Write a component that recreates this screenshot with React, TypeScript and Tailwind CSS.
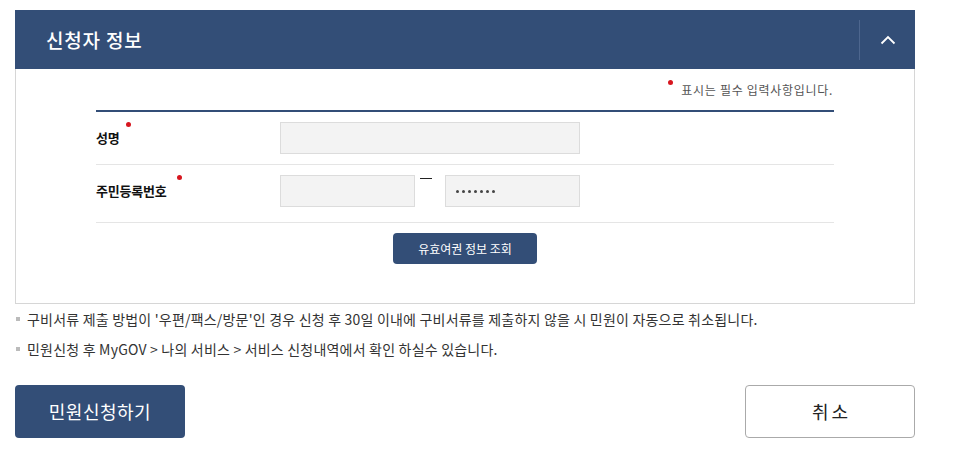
import React from 'react';

const font = { fontFamily: '"Noto Sans CJK KR", "Noto Sans", sans-serif' };

function Dot({ className = '' }: { className?: string }) {
  return <span className={`absolute w-[5px] h-[5px] rounded-full bg-[#d7161f] ${className}`} />;
}

export default function App() {
  return (
    <div className="w-[958px] h-[464px] bg-white pt-[10px] pl-[15px] text-[#333]" style={font}>
      <div className="w-[900px]">
        {/* header */}
        <div className="h-[59px] bg-[#334e77] flex items-center">
          <h2 className="ml-[31px] text-[19px] leading-none text-white font-medium tracking-[0.8px] flex-1">신청자 정보</h2>
          <div className="w-px h-[40px] bg-[#4d668e]" />
          <div className="w-[55px] flex justify-center">
            <svg width="16" height="10" viewBox="0 0 16 10" fill="none">
              <path d="M1.5 8.5 L8 2 L14.5 8.5" stroke="white" strokeWidth="1.8" />
            </svg>
          </div>
        </div>

        {/* body */}
        <div className="h-[235px] border-x border-b border-[#d6d6d6] px-[80px]">
          <div className="h-[41px] flex justify-end items-center pr-[1px]">
            <span className="relative pl-[13px] text-[12px] text-[#555] tracking-[0.7px]">
              <Dot className="left-[0px] -top-[1px]" />
              표시는 필수 입력사항입니다.
            </span>
          </div>
          <div className="border-t-2 border-[#334e77]">
            <div className="h-[53px] flex items-start pt-[10px] border-b border-[#e5e5e5]">
              <div className="w-[184px] h-[32px] flex items-center text-[13px] font-bold text-[#111] tracking-[-0.2px]">
                <span className="relative">
                  성명
                  <Dot className="-right-[11px] -top-[6px]" />
                </span>
              </div>
              <div className="w-[300px] h-[32px] bg-[#f3f3f3] border border-[#dcdcdc]" />
            </div>
            <div className="h-[58px] flex items-start pt-[10px] border-b border-[#e5e5e5]">
              <div className="w-[184px] h-[32px] flex items-center text-[13px] font-bold text-[#111] tracking-[-0.2px]">
                <span className="relative">
                  주민등록번호
                  <Dot className="-right-[15px] -top-[6px]" />
                </span>
              </div>
              <div className="w-[135px] h-[32px] bg-[#f3f3f3] border border-[#dcdcdc]" />
              <div className="w-[30px] h-[32px] pl-[5px]">
                <div className="w-[12px] h-px bg-[#222] mt-[3px]" />
              </div>
              <div className="w-[135px] h-[32px] bg-[#f3f3f3] border border-[#dcdcdc] flex items-center gap-[3px] pl-[10px]">
                {[0, 1, 2, 3, 4, 5, 6].map(i => (
                  <span key={i} className="w-[3px] h-[3px] rounded-full bg-[#444]" />
                ))}
              </div>
            </div>
          </div>
          <div className="flex justify-center pt-[10px]">
            <button className="w-[144px] h-[31px] rounded-[4px] bg-[#334e77] text-white text-[12px]">
              유효여권 정보 조회
            </button>
          </div>
        </div>
      </div>

      {/* notes */}
      <ul className="text-[14px] text-[#333] tracking-[0.2px]">
        <li className="flex items-center h-[30px]">
          <span className="w-[4px] h-[4px] bg-[#bbb] mr-[7px] ml-[1px]" />
          구비서류 제출 방법이 '우편/팩스/방문'인 경우 신청 후 30일 이내에 구비서류를 제출하지 않을 시 민원이 자동으로 취소됩니다.
        </li>
        <li className="flex items-center h-[30px]">
          <span className="w-[4px] h-[4px] bg-[#bbb] mr-[7px] ml-[1px]" />
          민원신청 후 MyGOV &gt; 나의 서비스 &gt; 서비스 신청내역에서 확인 하실수 있습니다.
        </li>
      </ul>

      {/* buttons */}
      <div className="w-[900px] flex justify-between mt-[21px]">
        <button className="w-[170px] h-[53px] rounded-[4px] bg-[#334e77] text-white text-[18px] tracking-[0.5px]">
          민원신청하기
        </button>
        <button className="w-[170px] h-[53px] rounded-[4px] bg-white border border-[#aaa] text-[#222] text-[18px] tracking-[3px] pl-[3px]">
          취소
        </button>
      </div>
    </div>
  );
}
